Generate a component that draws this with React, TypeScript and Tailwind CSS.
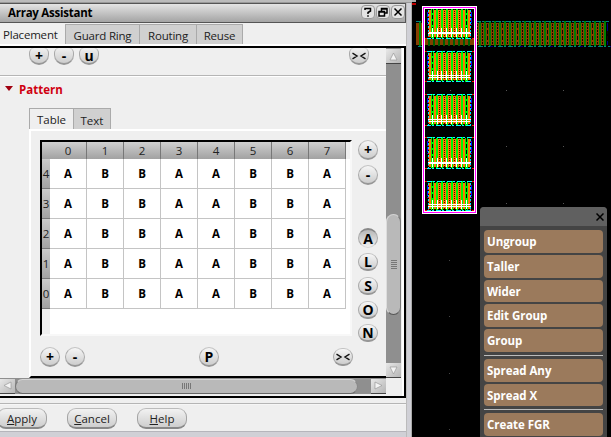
import React from "react";

const letters = ["A", "B", "B", "A", "A", "B", "B", "A"];

const roundLooks = {
  normal: "rounded-full h-5 border-b-2 border-t-[#c4c4c4] border-b-[#979797] from-[#f6f6f6] to-[#cdcdcd]",
  short: "rounded-full h-[18px] border-b-2 border-t-[#c4c4c4] border-b-[#979797] from-[#f6f6f6] to-[#cdcdcd]",
  pressed: "rounded-full h-5 border-t-2 border-t-[#888] border-b-[#d8d8d8] from-[#b8b8b8] to-[#f0f0f0]",
  clipped: "rounded-t-[5px] rounded-b-[10px] h-[17px] border-t-0 border-b-2 border-b-[#979797] from-[#efefef] to-[#cdcdcd]",
};

function Round({ children, look = "normal", className = "" }: { children: React.ReactNode; look?: keyof typeof roundLooks; className?: string }) {
  return (
    <span className={`flex w-5 shrink-0 items-center justify-center border border-x-[#a9a9a9] bg-linear-to-b pt-[1px] text-[14px] leading-none font-bold text-black ${roundLooks[look]} ${className}`}>
      {children}
    </span>
  );
}

function Cross() {
  return (
    <svg width="14" height="8" viewBox="0 0 14 8" fill="none" stroke="#111" strokeWidth="1.4">
      <path d="M0.5 1.2L5 4L0.5 6.8M13.5 1.2L9 4L13.5 6.8" />
    </svg>
  );
}

function WinButton({ children }: { children: React.ReactNode }) {
  return (
    <span className="flex h-[14px] w-[14px] items-center justify-center rounded-[4px] border border-[#999] bg-[#e4e4e4]">
      <svg width="10" height="10" viewBox="0 0 10 10" fill="none" stroke="#000" strokeWidth="1.5">{children}</svg>
    </span>
  );
}

function Arrow({ d }: { d: string }) {
  return (
    <span className="flex h-[15px] w-[15px] shrink-0 items-center justify-center border-b border-b-[#444] bg-linear-to-br from-[#e8e8e8] to-[#b5b5b5]">
      <svg width="9" height="9" viewBox="0 0 9 9" fill="#f4f4f4" stroke="#9a9a9a" strokeWidth="0.7"><path d={d} /></svg>
    </span>
  );
}

function PushButton({ k, rest, className }: { k: string; rest: string; className: string }) {
  return (
    <span className={`flex h-[21px] w-[50px] items-center justify-center rounded-[9px] border border-b-2 border-[#a3a3a3] border-t-[#bbb] border-b-[#888] bg-linear-to-b from-[#f2f2f2] to-[#cecece] pt-[2px] text-[11.5px] ${className}`}>
      <span><u>{k}</u>{rest}</span>
    </span>
  );
}

const dashCols = [439, 444, 449, 454, 459];

function Cell({ y, h, thick }: { y: number; h: number; thick: boolean }) {
  const bottom = y + h;
  return (
    <g>
      <rect x="428" y={y} width="43" height={h} fill="#000" />
      <rect x="429" y={y + 2} width="41" height={h - 4} fill="#ff7800" />
      {[431, 436, 441, 446, 451, 456, 461, 465].map((x, i) => (
        <rect key={x} x={x} y={y + (i % 2)} width={i === 0 || i === 7 ? 3 : 2} height={h - 1} fill="#00f800" />
      ))}
      {dashCols.map((x) => <path key={x} d={`M${x + 0.5} ${y + 1}V${bottom - 1}`} stroke="#2a1800" strokeDasharray="1 1" />)}
      {[432, 466].map((x) => <path key={x} d={`M${x + 0.5} ${y + 1}V${bottom - 1}`} stroke="#000" strokeDasharray="4 2" />)}
      {[432, 437, 441, 446, 451, 456, 461, 466].map((x) => <rect key={x} x={x} y={bottom - 11} width="1" height="9" fill="#fff" />)}
      {thick
        ? <rect x="428" y={bottom - 7} width="43" height="2" fill="#fff" />
        : <path d={`M428 ${bottom - 6.5}H471M428 ${bottom - 4.5}H471`} stroke="#fff" />}
      <path d={`M427 ${y + 0.5}H473M426 ${bottom - 0.5}H473`} stroke="#00ffff" strokeDasharray="5 1 2 2" />
      <path d={`M425 ${y + 0.5}H427M472 ${y + 0.5}H474M425 ${bottom - 0.5}H427M472 ${bottom - 0.5}H474`} stroke="#f00" />
      <path d={`M428.5 ${y + 2}V${bottom}M470.5 ${y + 2}V${bottom}`} stroke="#00e8ff" strokeDasharray="2 2" />
      <path d={`M428.5 ${y + 4}V${bottom}M470.5 ${y + 4}V${bottom}`} stroke="#f22" strokeDasharray="1 3" />
      <path d={`M427.5 ${y + 4}V${y + 17}M471.5 ${y + 4}V${y + 17}`} stroke="#00f" strokeDasharray="5 1" />
    </g>
  );
}

function LayoutDrawing() {
  const fingers = Array.from({ length: 38 }, (_, i) => 419 + i * 5);
  return (
    <svg className="block" width="199" height="437" viewBox="412 0 199 437" shapeRendering="crispEdges">
      <rect x="412" width="199" height="437" fill="#000" />
      <rect x="412" width="4" height="2" fill="#aaa" />
      <rect x="412" y="3" width="4" height="2" fill="#c00000" />
      <rect x="416" y="23" width="190" height="22" fill="#884000" />
      {fingers.map((x, i) => (
        <g key={x}>
          <path d={`M${x + 3.5} 24V44`} stroke="#100800" strokeDasharray={i % 3 === 1 ? "4 2" : "2 1"} />
          <rect x={x} y="21" width="2" height="25" fill="#008000" />
        </g>
      ))}
      <path d="M416 21.5H609M418 46.5H611" stroke="#008080" strokeDasharray="5 1 2 2" />
      <path d="M430 46.5H611" stroke="#000080" strokeDasharray="3 27" />
      <path d="M607.5 23V31M607.5 41V45" stroke="#000080" />
      <rect x="425" y="9" width="49" height="202" fill="#000" />
      <rect x="425" y="39" width="49" height="6" fill="#804000" />
      {[428, 433, 438, 443, 448, 453, 458, 463, 468].map((x) => <rect key={x} x={x} y="39" width="2" height="7" fill="#006000" />)}
      <Cell y={8} h={31} thick />
      <Cell y={51} h={31} thick={false} />
      <Cell y={94} h={32} thick={false} />
      <Cell y={137} h={32} thick />
      <Cell y={181} h={30} thick={false} />
      <rect x="422.5" y="6.5" width="54" height="207" fill="none" stroke="#fff" />
      <rect x="423.5" y="7.5" width="52" height="205" fill="none" stroke="#f0f" />
      <rect x="424.5" y="8.5" width="50" height="203" fill="none" stroke="#fff" />
      {[90, 146, 203].map((y) => [506, 563].map((x) => <rect key={`${x}-${y}`} x={x} y={y} width="1" height="1" fill="#555" />))}
      {[260, 316, 373, 429].map((y) => <rect key={y} x="449" y={y} width="1" height="1" fill="#444" />)}
      <rect x="450" y="90" width="1" height="1" fill="#555" />
    </svg>
  );
}

function Action({ label, short = false, className = "" }: { label: string; short?: boolean; className?: string }) {
  return (
    <div className={`flex items-center rounded-[4px] bg-[#9b7a5c] pt-[1px] pl-[3px] text-[11.5px] leading-none font-bold tracking-[-0.05px] text-white ${short ? "h-[22px]" : "h-[23px]"} ${className}`}>
      {label}
    </div>
  );
}

export default function App() {
  return (
    <main className="flex h-[437px] w-[611px] overflow-hidden bg-black font-['Open_Sans','Noto_Sans',sans-serif] text-[12px] leading-none text-[#222]">
      <section className="flex w-[412px] shrink-0 flex-col bg-[#efefef]">
        <div className="h-[3px] shrink-0 border-b border-[#999] bg-[#bbb]" />
        <div className="flex grow">
          <div className="flex w-[406px] flex-col">
            <header className="flex h-5 shrink-0 items-center border-y border-r border-[#555] bg-linear-to-b from-[#e4e4e4] to-[#a4a4a4] pl-2 text-[11.5px] font-bold tracking-[-0.25px] text-black">
              <span className="grow">Array Assistant</span>
              <span className="flex gap-[1px] pb-[2px]">
                <WinButton><path d="M2 3V1.5H7.5V4L5 5.5V7M5 8.2V9.7" /></WinButton>
                <WinButton><path d="M3.5 4V1.5H9V6H6.5M1 4.5H6.5V9H1ZM1 5H6.5M3.5 2H9" /></WinButton>
                <WinButton><path d="M1.5 1.5L8.5 8.5M8.5 1.5L1.5 8.5" /></WinButton>
              </span>
            </header>
            <nav className="flex h-[21px] shrink-0 items-stretch pt-[1px] text-[11.5px] tracking-[-0.2px]">
              <span className="flex w-[66px] items-center border-r border-[#aaa] pt-[2px] pl-[3px]">Placement</span>
              <span className="flex w-[74px] items-center justify-center border-t border-r border-[#aaa] bg-[#d0d0d0] pt-[3px]">Guard Ring</span>
              <span className="flex w-[57px] items-center justify-center border-t border-r border-[#aaa] bg-[#d0d0d0] pt-[3px]">Routing</span>
              <span className="flex w-[46px] items-center justify-center border-t border-r border-[#aaa] bg-[#d0d0d0] pt-[3px]">Reuse</span>
            </nav>
            <div className="h-[4px] shrink-0 border-t-2 border-b-2 border-t-white border-b-black" />
            <div className="flex h-[350px] shrink-0 border-r-2 border-b-2 border-black">
              <div className="flex w-[386px] shrink-0 flex-col">
                <div className="flex h-[330px] flex-col">
                  <div className="flex h-[27px] items-start pr-[17px] pl-[29px]">
                    <Round look="clipped" className="mr-[5px]">+</Round>
                    <Round look="clipped" className="mr-[5px]">-</Round>
                    <Round look="clipped">u</Round>
                    <Round look="clipped" className="ml-auto"><Cross /></Round>
                  </div>
                  <div className="h-[2px] shrink-0 border-t border-b border-t-[#b5b5b5] border-b-white" />
                  <div className="flex h-[31px] items-start pt-[7px] pl-[5px] text-[11.5px] font-bold text-[#d00010]">
                    <svg className="mt-[2px] mr-[6px]" width="8" height="5" viewBox="0 0 8 5" fill="#a00010"><path d="M0 0H8L4 5Z" /></svg>
                    Pattern
                  </div>
                  <div className="flex h-[21px] shrink-0 pl-[29px] text-[11.5px]">
                    <span className="flex w-[45px] items-center justify-center border-t border-r border-l border-[#aaa] pt-[2px]">Table</span>
                    <span className="flex w-[37px] items-center justify-center border-t border-r border-[#aaa] bg-[#d0d0d0] pt-[4px]">Text</span>
                  </div>
                  <div className="ml-[29px] flex h-[249px] shrink-0 flex-col border-t-2 border-b-2 border-l-2 border-t-white border-b-black border-l-white pt-[9px] pl-[9px]">
                    <div className="flex">
                      <div className="flex h-[196px] w-[312px] flex-col border-t-2 border-r-2 border-b-2 border-l-2 border-t-black border-r-[#f8f8f8] border-b-[#f8f8f8] border-l-black bg-white">
                        <div className="flex h-[17px] shrink-0 bg-linear-to-b from-[#d0d0d0] to-[#a2a2a2]">
                          <span className="w-2" />
                          {letters.map((_, i) => (
                            <span key={i} className="flex w-[37px] items-center justify-center border-r border-[#777] pt-[1px] text-[11.5px]">{i}</span>
                          ))}
                          <span className="grow bg-[#efefef]" />
                        </div>
                        {[4, 3, 2, 1, 0].map((n) => (
                          <div key={n} className="flex h-[30px] shrink-0">
                            <span className="flex w-2 items-center justify-center border-b border-[#777] bg-linear-to-b from-[#ccc] to-[#a2a2a2] pt-[1px] text-[11.5px]">{n}</span>
                            {letters.map((c, i) => (
                              <span key={i} className="flex w-[37px] items-center justify-center border-r border-b border-[#c4c4c4] pt-[1px] text-[11.5px] font-bold text-black">{c}</span>
                            ))}
                          </div>
                        ))}
                        <div className="w-2 grow bg-[#efefef]" />
                      </div>
                      <div className="ml-[6px] flex flex-col">
                        <Round>+</Round>
                        <Round className="mt-[5px]">-</Round>
                        <Round look="pressed" className="mt-[43px]">A</Round>
                        <Round look="short" className="mt-[5px]">L</Round>
                        <Round look="short" className="mt-[6px]">S</Round>
                        <Round look="short" className="mt-[6px]">O</Round>
                        <Round look="short" className="mt-[5px]">N</Round>
                      </div>
                    </div>
                    <div className="mt-[5px] flex w-[313px] items-center">
                      <Round>+</Round>
                      <Round className="ml-[5px]">-</Round>
                      <Round className="ml-[114px]">P</Round>
                      <Round look="short" className="ml-auto"><Cross /></Round>
                    </div>
                  </div>
                </div>
                <div className="flex h-4 items-center bg-[#8f8f8f]">
                  <Arrow d="M8 1L1 4.5L8 8Z" />
                  <span className="flex h-[15px] w-[343px] items-center justify-center gap-[1px] rounded-full border border-t-[#d4d4d4] border-r-[#888] border-b-[#666] border-l-[#777] bg-[#b9b9b9]">
                    {[0, 1, 2, 3, 4].map((n) => <i key={n} className="h-[6px] w-[1px] bg-[#777]" />)}
                  </span>
                  <span className="grow" />
                  <Arrow d="M1 1L8 4.5L1 8Z" />
                </div>
              </div>
              <div className="flex h-[330px] w-[15px] shrink-0 flex-col items-center bg-[#8f8f8f] pt-[1px]">
                <Arrow d="M4.5 1L8 8H1Z" />
                <span className="mt-[150px] flex h-[101px] w-[15px] flex-col items-center justify-center gap-[1px] rounded-full border border-t-[#d4d4d4] border-r-[#777] border-b-[#555] border-l-[#ddd] bg-[#b9b9b9]">
                  {[0, 1, 2, 3, 4].map((n) => <i key={n} className="h-[1px] w-[6px] bg-[#777]" />)}
                </span>
                <span className="grow" />
                <Arrow d="M1 1H8L4.5 8Z" />
              </div>
              <div className="ml-[1px] w-[2px] bg-white" />
            </div>
            <div className="mt-[5px] h-[2px] shrink-0 border-t border-b border-t-[#b5b5b5] border-b-[#f6f6f6]" />
            <footer className="flex h-[26px] shrink-0 items-start pt-[3px]">
              <PushButton k="A" rest="pply" className="-ml-[3px]" />
              <PushButton k="C" rest="ancel" className="ml-[20px]" />
              <PushButton k="H" rest="elp" className="ml-[20px]" />
            </footer>
            <div className="grow border-t border-[#b5b5bb] bg-[#d0d0d6]" />
          </div>
          <div className="grow border-r border-l border-r-[#aaa] border-l-[#bbb] bg-[#d0d0d6]" />
        </div>
      </section>
      <section className="relative w-[199px] shrink-0">
        <LayoutDrawing />
        <aside className="absolute top-[207px] left-[68px] flex h-[230px] w-[127px] flex-col rounded-t-[4px] bg-[#444]">
          <div className="flex h-[19px] shrink-0 items-center justify-end rounded-t-[4px] bg-[#606060] pr-[3px]">
            <svg width="8" height="8" viewBox="0 0 8 8" fill="none" stroke="#000" strokeWidth="1.5"><path d="M.5 .5L7.5 7.5M7.5 .5L.5 7.5" /></svg>
          </div>
          <div className="flex flex-col px-1 pt-1">
            <Action label="Ungroup" />
            <Action label="Taller" className="mt-[2px]" />
            <Action label="Wider" short className="mt-[2px]" />
            <Action label="Edit Group" className="mt-[2px]" />
            <Action label="Group" className="mt-[2px]" />
            <div className="mt-[3px] h-[1px] bg-[#bbb]" />
            <Action label="Spread Any" className="mt-[3px]" />
            <Action label="Spread X" short className="mt-[2px]" />
            <div className="mt-[3px] h-[1px] bg-[#bbb]" />
            <Action label="Create FGR" className="mt-[3px]" />
          </div>
        </aside>
      </section>
    </main>
  );
}
